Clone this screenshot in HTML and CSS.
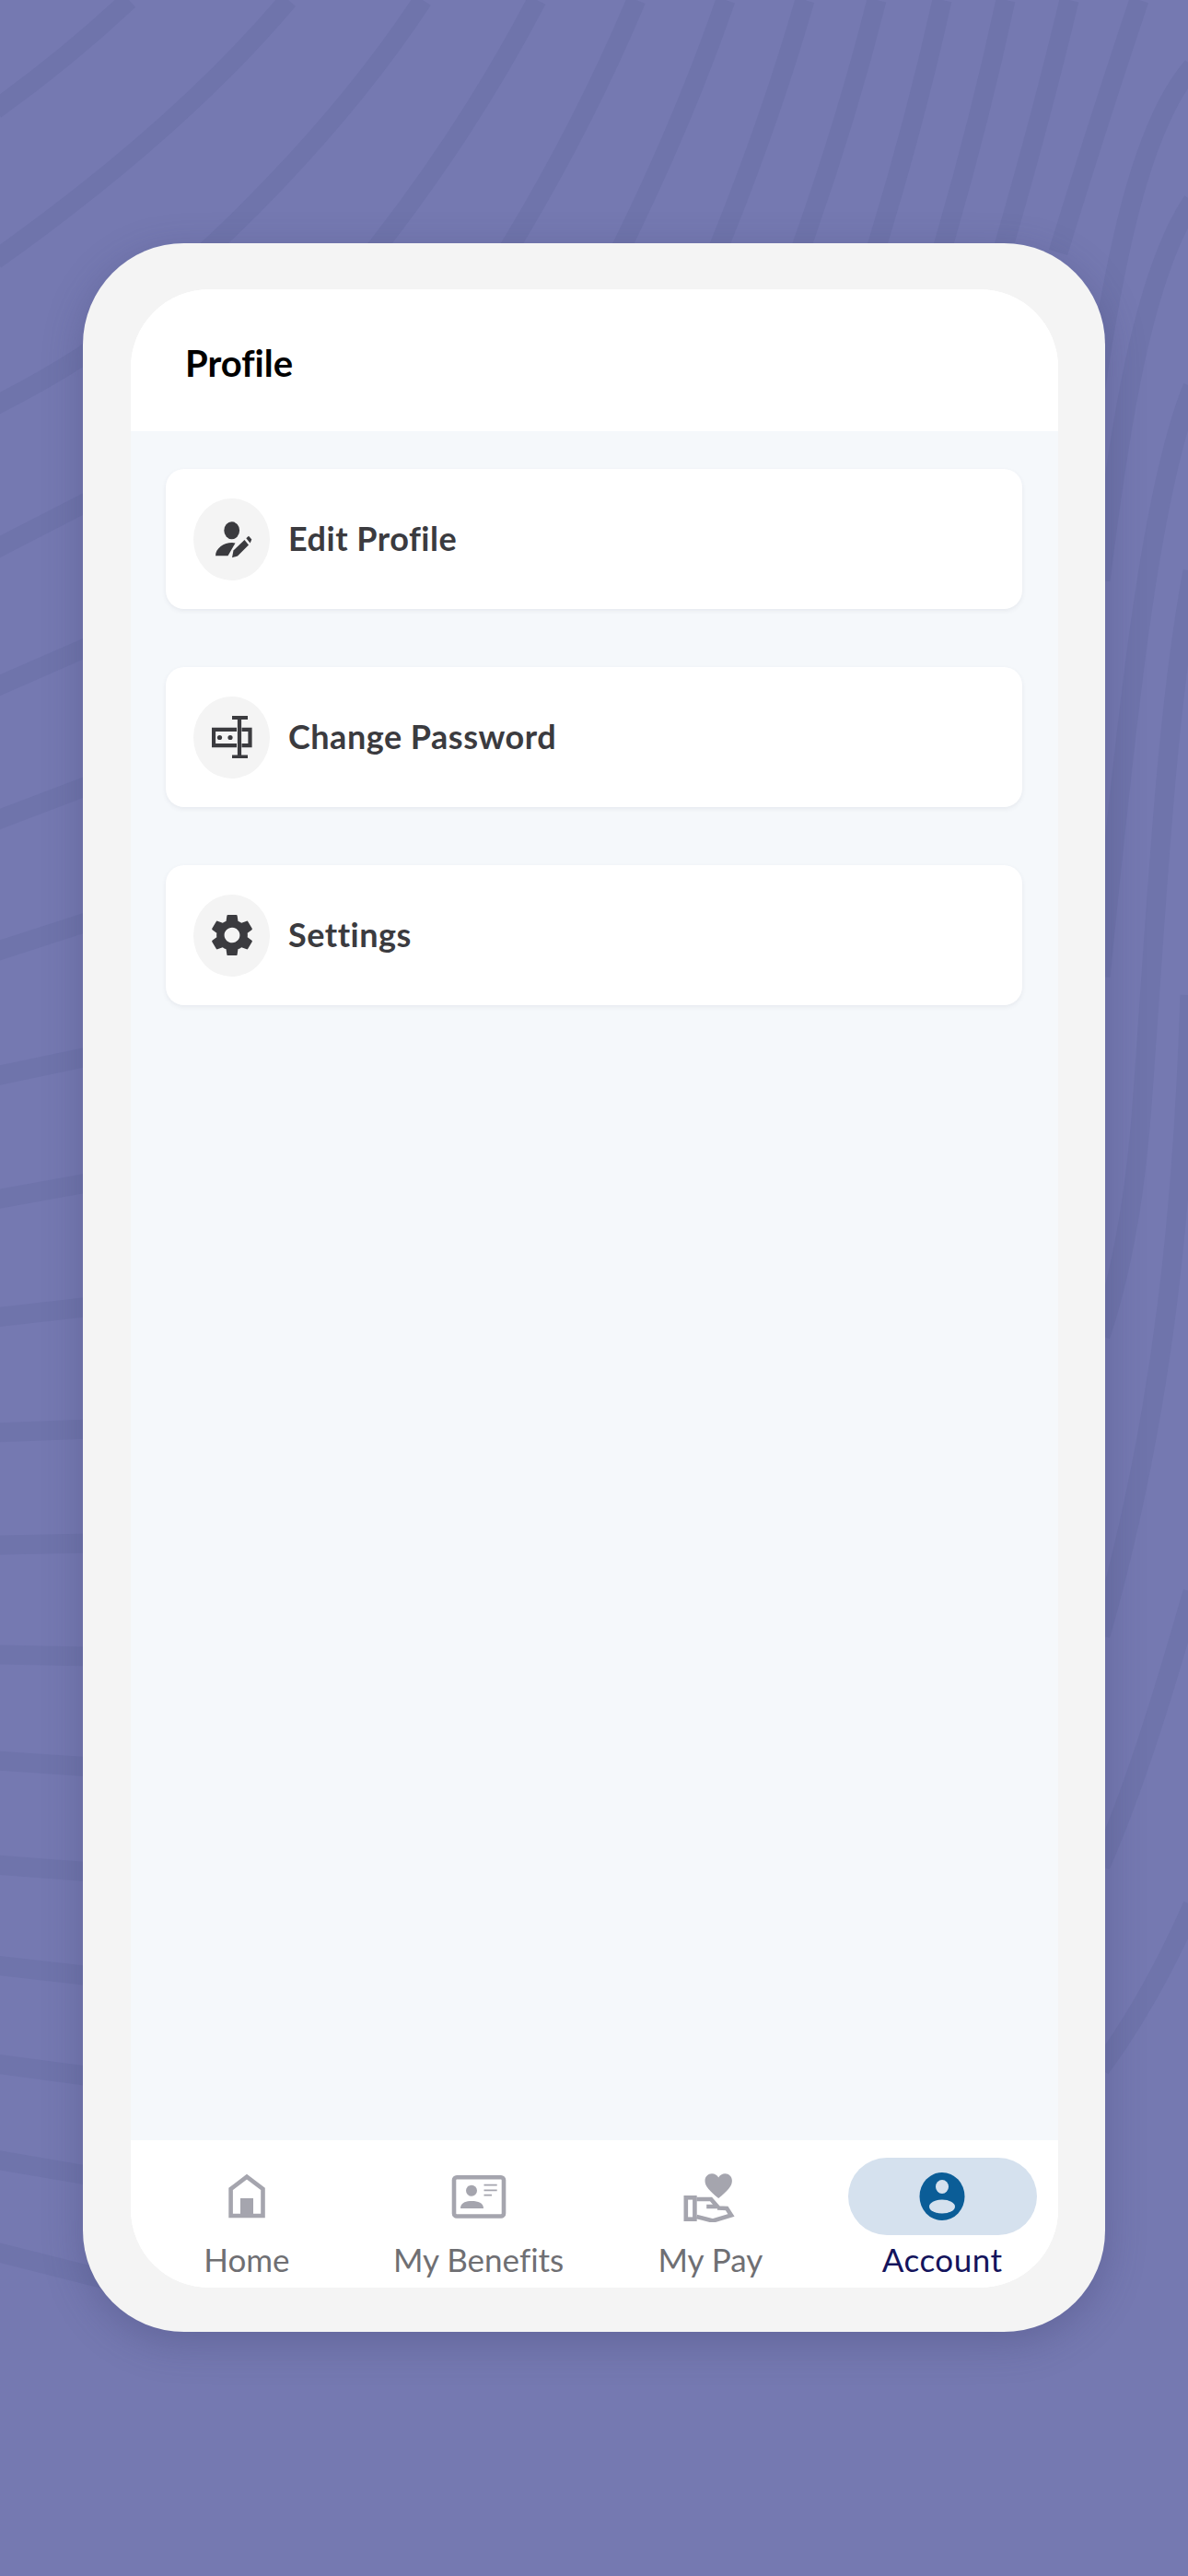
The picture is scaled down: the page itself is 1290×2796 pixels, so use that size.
FILE: index.html
```html
<!DOCTYPE html>
<html>
  <head>
    <meta charset="UTF-8">
    <title>Profile</title>
    <link rel="stylesheet" href="styles.css">
  </head>
  <body>
    <!-- Background stripes -->
    <svg class="backdrop" viewBox="0 0 1290 2796" aria-hidden="true">
      <path d="M140 0Q74 62 -5 119"/>
      <path d="M313 0Q195 140 -5 282"/>
      <path d="M459 0C370 135 240 270 90 386Q45 415 -5 440"/>
      <path d="M583 0Q510 140 405 274"/>
      <path d="M691 0Q632 140 550 274"/>
      <path d="M788 0Q742 133 672 274"/>
      <path d="M874 0Q835 135 778 274"/>
      <path d="M952 0Q918 135 868 274"/>
      <path d="M1023 0Q993 135 950 274"/>
      <path d="M1092 0Q1063 135 1022 274"/>
      <path d="M1161 0Q1130 130 1088 274"/>
      <path d="M1237 0Q1195 125 1149 274"/>
      <path d="M1295 72C1245 130 1215 250 1190 420"/>
      <path d="M1295 218C1240 300 1215 470 1195 630"/>
      <path d="M1295 420C1250 530 1225 760 1195 1060"/>
      <path d="M1295 620C1265 780 1255 1000 1240 1200C1232 1310 1215 1390 1195 1450"/>
      <path d="M1292 1080C1285 1300 1265 1530 1195 1775"/>
      <path d="M1295 1728C1260 1850 1230 1945 1195 2025"/>
      <path d="M1295 2068Q1250 2170 1195 2245"/>
      <path d="M-5 596L100 542"/>
      <path d="M-5 746L100 700"/>
      <path d="M-5 891L100 851"/>
      <path d="M-5 1033L100 999"/>
      <path d="M-5 1168L100 1146"/>
      <path d="M-5 1302L100 1283"/>
      <path d="M-5 1430L100 1418"/>
      <path d="M-5 1555L100 1551"/>
      <path d="M-5 1677L100 1675"/>
      <path d="M-5 1796L100 1798"/>
      <path d="M-5 1911L100 1918"/>
      <path d="M-5 2024L100 2032"/>
      <path d="M-5 2133L100 2145"/>
      <path d="M-5 2240L100 2254"/>
      <path d="M-5 2344L100 2362"/>
      <path d="M-5 2444L130 2478"/>
    </svg>

    <div class="phone">
      <div class="screen">
        <header class="top-bar">
          <h1>Profile</h1>
        </header>

        <main class="menu">
          <a class="menu-card">
            <span class="menu-icon">
              <svg width="44" height="46" viewBox="0 0 44 46">
                <ellipse cx="21.7" cy="13.8" rx="8.4" ry="9.5"/>
                <path d="M4 41.3C4 33 13 27 22 27L25.5 27.5L17.5 41.3Z"/>
                <path d="M22 43.3L23.5 35.5L35.5 24L40 29.5L28 41.5Z"/>
                <path d="M37.3 22.3L40 19.8L43.3 23.5L41.6 27.6Z"/>
              </svg>
            </span>
            <span class="menu-label">Edit Profile</span>
          </a>

          <a class="menu-card">
            <span class="menu-icon">
              <svg width="44" height="46" viewBox="0 0 44 46">
                <g class="line-icon">
                  <path d="M27 14.8H2V32.2H27"/>
                  <path d="M32.5 14.8H41.500V32.2H32.5"/>
                  <path d="M30 2V44.5M22 2H39M22 44.5H39"/>
                </g>
                <circle cx="8.5" cy="23.5" r="2.6"/>
                <circle cx="20" cy="23.5" r="2.6"/>
              </svg>
            </span>
            <span class="menu-label">Change Password</span>
          </a>

          <a class="menu-card">
            <span class="menu-icon">
              <svg width="44" height="46" viewBox="2.6 2 18.8 20" preserveAspectRatio="none">
                <path d="M19.14 12.94c.04-.3.06-.61.06-.94 0-.32-.02-.64-.07-.94l2.03-1.58c.18-.14.23-.41.12-.61l-1.92-3.32c-.12-.22-.37-.29-.59-.22l-2.39.96c-.5-.38-1.03-.7-1.62-.94l-.36-2.54c-.04-.24-.24-.41-.48-.41h-3.84c-.24 0-.43.17-.47.41l-.36 2.54c-.59.24-1.13.57-1.62.94l-2.39-.96c-.22-.08-.47 0-.59.22L2.74 8.87c-.12.21-.08.47.12.61l2.03 1.58c-.05.3-.09.63-.09.94s.02.64.07.94l-2.03 1.58c-.18.14-.23.41-.12.61l1.92 3.32c.12.22.37.29.59.22l2.39-.96c.5.38 1.03.7 1.62.94l.36 2.54c.05.24.24.41.48.41h3.84c.24 0 .44-.17.47-.41l.36-2.54c.59-.24 1.13-.56 1.62-.94l2.39.96c.22.08.47 0 .59-.22l1.92-3.32c.12-.22.07-.47-.12-.61l-2.01-1.58zM12 15.6c-1.98 0-3.6-1.62-3.6-3.6s1.62-3.6 3.6-3.6 3.6 1.62 3.6 3.6-1.62 3.6-3.6 3.6z"/>
              </svg>
            </span>
            <span class="menu-label">Settings</span>
          </a>
        </main>

        <!-- Bottom navigation -->
        <nav class="tabs">
          <a class="tab">
            <span class="tab-icon">
              <svg width="44" height="50" viewBox="0 0 44 50">
                <path class="tab-line" d="M4.6 46V17L22 3.6L39.5 17V46Z"/>
                <rect x="15" y="27" width="14" height="21"/>
              </svg>
            </span>
            <span class="tab-label">Home</span>
          </a>
          <a class="tab">
            <span class="tab-icon">
              <svg width="60" height="48" viewBox="0 0 60 48">
                <rect class="tab-line" x="3" y="3.2" width="54" height="42.3" rx="3"/>
                <circle cx="22" cy="17.7" r="6"/>
                <path d="M10 37C10 31 16 29 22.5 29C29 29 35 31 35 37Z"/>
                <path class="tab-thin" d="M35.5 11.7H49.7M35.5 17.3H49.7M35.5 22.7H44"/>
              </svg>
            </span>
            <span class="tab-label">My Benefits</span>
          </a>
          <a class="tab">
            <span class="tab-icon">
              <svg width="60" height="56" viewBox="0 0 60 56">
                <path d="M39.2 30C29.5 22 24.5 17 24.5 11C24.5 6.5 28 3.3 32 3.3C35 3.3 38 5 39.2 7.5C40.4 5 43.4 3.3 46.4 3.3C50.4 3.3 53.9 6.5 53.9 11C53.9 17 48.9 22 39.2 30Z"/>
                <rect class="tab-line" x="3.8" y="29.3" width="9.6" height="23.4"/>
                <path class="tab-line" d="M15.4 31H31L38 39H26.2M38 40.5L48.2 41L53 48.5L33 54.5L15.4 50"/>
              </svg>
            </span>
            <span class="tab-label">My Pay</span>
          </a>
          <a class="tab active">
            <span class="tab-icon">
              <svg width="50" height="54" viewBox="0 0 50 54">
                <ellipse class="account-disc" cx="25" cy="27" rx="24.5" ry="26"/>
                <ellipse class="account-cut" cx="25" cy="16.5" rx="7" ry="7.5"/>
                <ellipse class="account-cut" cx="25" cy="38" rx="14" ry="7.5"/>
              </svg>
            </span>
            <span class="tab-label">Account</span>
          </a>
        </nav>
      </div>
    </div>
  </body>
</html>
```

FILE: styles.css
```css
html, body {
  margin: 0;
  height: 2796px;
}

body {
  position: relative;
  overflow: hidden;
  background-color: #7579b1;
  font-family: "Lato", "Liberation Sans", sans-serif;
  font-variant-ligatures: none;
}

.backdrop {
  position: absolute;
  left: 0;
  top: 0;
  width: 1290px;
  height: 2796px;
  fill: none;
  stroke: #6f74ab;
  stroke-width: 21;
}

/* Phone frame */
.phone {
  position: relative;
  box-sizing: border-box;
  width: 1110px;
  height: 2267px;
  margin: 0 90px;
  top: 264px;
  padding: 50px 51px 48px 52px;
  background-color: #f4f4f4;
  border-radius: 110px;
  box-shadow: 0 12px 44px rgba(60, 62, 110, 0.32);
}

.screen {
  display: flex;
  flex-direction: column;
  height: 100%;
  overflow: hidden;
  background-color: #fff;
  border-radius: 85px;
}

/* Title bar */
.top-bar {
  flex: none;
  display: flex;
  align-items: center;
  height: 154px;
  padding-left: 59px;
  background-color: #fff;
}

.top-bar h1 {
  margin: 6px 0 0;
  color: #000;
  font-size: 40px;
  font-weight: 700;
}

/* Menu */
.menu {
  flex: 1;
  display: flex;
  flex-direction: column;
  gap: 63px;
  padding: 41px 39px 0 38px;
  background-color: #f5f8fb;
}

.menu-card {
  display: flex;
  align-items: center;
  gap: 20px;
  height: 152px;
  padding-left: 30px;
  background-color: #fff;
  border-radius: 20px;
  box-shadow: 0 2px 5px rgba(60, 70, 90, 0.08);
}

.menu-icon {
  display: flex;
  align-items: center;
  justify-content: center;
  width: 83px;
  height: 89px;
  background-color: #f4f4f4;
  border-radius: 50%;
}

.menu-icon svg {
  fill: #3b3b3f;
}

.line-icon {
  fill: none;
  stroke: #3b3b3f;
  stroke-width: 4.2;
}

.menu-label {
  padding-bottom: 3px;
  color: #3b3b3f;
  font-size: 36px;
  font-weight: 700;
  letter-spacing: 0.5px;
}

/* Bottom navigation */
.tabs {
  flex: none;
  display: grid;
  grid-template-columns: repeat(4, 1fr);
  height: 160px;
  background-color: #fff;
}

.tab {
  display: flex;
  flex-direction: column;
  align-items: center;
  padding-top: 19px;
}

.tab-icon {
  display: flex;
  align-items: center;
  justify-content: center;
  width: 205px;
  height: 84px;
  border-radius: 42px;
}

.tab-icon svg {
  fill: #a5a5ae;
}

.tab-line {
  fill: none;
  stroke: #a5a5ae;
  stroke-width: 4.6;
}

.tab-thin {
  fill: none;
  stroke: #a5a5ae;
  stroke-width: 1.7;
}

.tab-label {
  margin-top: 3px;
  color: #6f6f73;
  font-size: 35px;
  line-height: 46px;
}

.tab.active .tab-icon {
  background-color: #d5e1ee;
}

.tab.active .tab-label {
  color: #14145c;
  letter-spacing: 0.5px;
}

.account-disc {
  fill: #0b5d97;
}

.account-cut {
  fill: #d5e1ee;
}
```
